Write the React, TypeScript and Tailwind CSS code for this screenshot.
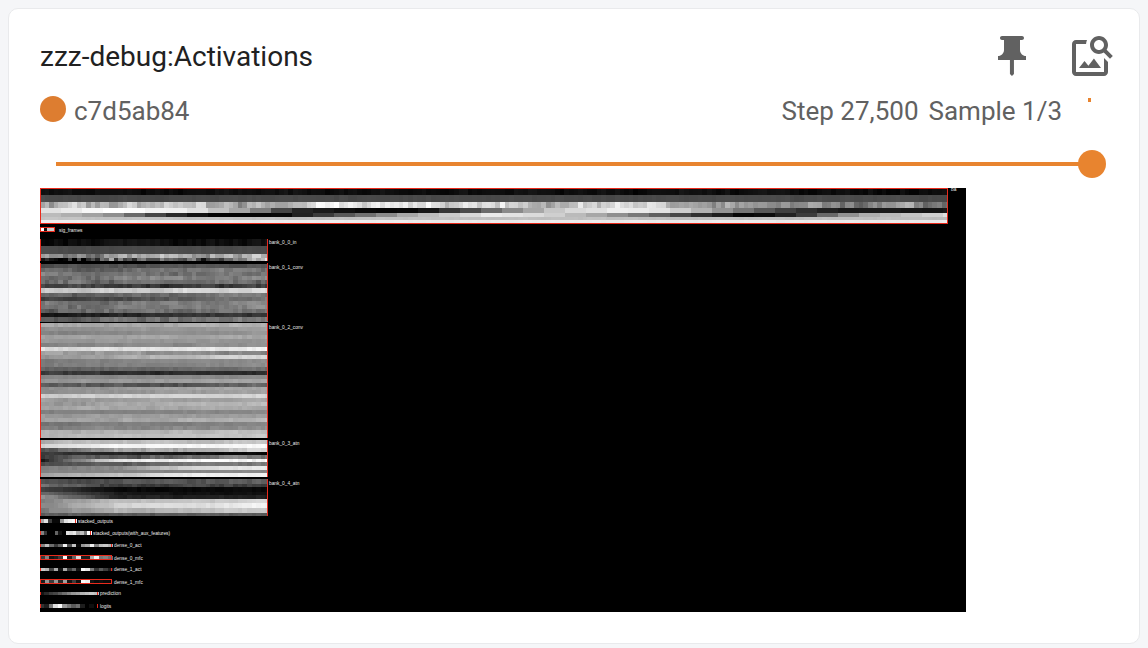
import React, { useMemo } from "react";

const RED = "#e92a1c";
const FONT = { fontFamily: "Roboto, sans-serif" };

function rng(seed: number) {
  return () => {
    seed |= 0;
    seed = (seed + 0x6d2b79f5) | 0;
    let t = Math.imul(seed ^ (seed >>> 15), 1 | seed);
    t = (t + Math.imul(t ^ (t >>> 7), 61 | t)) ^ t;
    return ((t ^ (t >>> 14)) >>> 0) / 4294967296;
  };
}

function lerp(points: number[][], x: number) {
  if (x <= points[0][0]) return points[0][1];
  for (let i = 1; i < points.length; i++) {
    if (x <= points[i][0]) {
      const [a, av] = points[i - 1];
      const [b, bv] = points[i];
      return av + ((bv - av) * (x - a)) / (b - a);
    }
  }
  return points[points.length - 1][1];
}

const gray = (v: number) => {
  const c = Math.max(0, Math.min(255, Math.round(v)));
  return `rgb(${c},${c},${c})`;
};

type Row = { h: number; p: number[][]; n: number; w?: number };
type Cell = { x: number; y: number; w: number; h: number; fill: string };

function heat(x0: number, x1: number, y0: number, rows: Row[], seed: number, cw = 4.6): Cell[] {
  const r = rng(seed);
  const cells: Cell[] = [];
  let y = y0;
  for (const row of rows) {
    const w = row.w ?? cw;
    let slow = (r() - 0.5) * 2;
    for (let x = x0; x < x1; x += w) {
      slow = 0.75 * slow + 0.5 * (r() - 0.5) * 2;
      const white = (r() - 0.5) * 2;
      const v = lerp(row.p, x) + (0.75 * slow + 0.45 * white) * row.n;
      cells.push({ x, y, w: Math.min(w + 0.4, x1 - x), h: row.h, fill: gray(v) });
    }
    y += row.h;
  }
  return cells;
}

const flat = (l: number, r: number = l, x0 = 40, x1 = 268) => [
  [x0, l],
  [x1, r],
];

const topRows: Row[] = [
  { h: 6, p: flat(14, 14, 40, 948), n: 12 },
  { h: 7, p: flat(74, 74, 40, 948), n: 5 },
  {
    h: 6,
    p: [
      [40, 185],
      [200, 190],
      [280, 140],
      [330, 225],
      [420, 225],
      [520, 205],
      [620, 190],
      [720, 160],
      [800, 150],
      [948, 130],
    ],
    n: 50,
  },
  {
    h: 5,
    w: 21,
    p: [
      [40, 220],
      [100, 255],
      [180, 235],
      [240, 150],
      [280, 40],
      [350, 5],
      [410, 10],
      [470, 90],
      [550, 205],
      [610, 240],
      [660, 225],
      [720, 140],
      [780, 60],
      [830, 25],
      [948, 20],
    ],
    n: 6,
  },
  {
    h: 4,
    w: 21,
    p: [
      [40, 190],
      [100, 150],
      [150, 60],
      [200, 5],
      [270, 5],
      [320, 70],
      [400, 170],
      [480, 235],
      [540, 215],
      [620, 130],
      [690, 50],
      [740, 0],
      [790, 50],
      [850, 170],
      [948, 225],
    ],
    n: 4,
  },
  { h: 3, p: flat(195, 190, 40, 948), n: 4 },
  { h: 3, p: flat(238, 235, 40, 948), n: 3 },
];

const bank0: Row[] = [
  { h: 7, p: flat(14), n: 12 },
  { h: 8, p: flat(75), n: 5 },
  { h: 4, p: flat(150, 190), n: 60 },
  { h: 3, p: flat(50, 130), n: 130 },
];

const bank1: Row[] = [
  [70, 90, 14],
  [105, 120, 24],
  [120, 120, 24],
  [110, 125, 28],
  [118, 95, 32],
  [60, 55, 26],
  [195, 215, 22],
  [95, 125, 22],
  [55, 120, 16],
  [115, 130, 22],
  [105, 140, 26],
  [90, 130, 30],
  [18, 60, 20],
  [95, 125, 28],
].map(([l, r, n]) => ({ h: 4.15, p: flat(l, r), n }));

const bank2: Row[] = [
  [165, 180, 14],
  [140, 160, 8],
  [128, 150, 8],
  [160, 165, 12],
  [150, 150, 10],
  [125, 150, 12],
  [215, 235, 14],
  [155, 130, 22],
  [150, 215, 14],
  [125, 140, 9],
  [120, 145, 12],
  [100, 110, 12],
  [55, 45, 16],
  [135, 135, 9],
  [150, 165, 10],
  [85, 95, 22],
  [140, 175, 12],
  [140, 165, 12],
  [205, 215, 12],
  [155, 165, 12],
  [150, 195, 16],
  [160, 175, 12],
  [125, 140, 10],
  [150, 160, 12],
  [150, 190, 14],
  [115, 135, 10],
  [130, 145, 14],
  [175, 190, 12],
  [180, 200, 8],
].map(([l, r, n]) => ({ h: 3.97, p: flat(l, r), n }));

const b = (...pts: number[]) => pts.map((v, i) => [40 + (i * 228) / (pts.length - 1), v]);

const bank3: Row[] = [
  { h: 4, p: b(175, 185, 190, 200), n: 12 },
  { h: 4, p: b(215, 250, 245, 250), n: 8 },
  { h: 3.5, p: b(90, 170, 175, 215), n: 25 },
  { h: 3.5, p: b(60, 30, 15, 8), n: 10 },
  { h: 3.5, p: b(70, 95, 110, 125), n: 26 },
  { h: 3.5, p: b(40, 225, 250, 250), n: 18 },
  { h: 4, p: b(70, 90, 120, 125), n: 14 },
  { h: 3.5, p: b(130, 140, 215, 235), n: 10 },
  { h: 3.5, p: flat(130, 135), n: 4 },
  { h: 4, p: b(165, 190, 240, 245), n: 8 },
];

const bank4: Row[] = [
  { h: 4.5, p: flat(75, 95), n: 16 },
  { h: 3, p: b(120, 60, 70, 45), n: 22 },
  { h: 5, p: b(70, 10, 8, 5), n: 8 },
  { h: 3, p: b(100, 22, 18, 15), n: 8 },
  { h: 4, p: b(140, 35, 32, 30), n: 10 },
  { h: 4.5, p: b(130, 190, 195, 215), n: 12 },
  { h: 5, p: b(130, 215, 225, 240), n: 10 },
  { h: 4.5, p: b(130, 180, 185, 205), n: 14 },
  { h: 3.5, p: flat(90, 90), n: 14 },
];

type Strip = {
  x1: number;
  y: number;
  h: number;
  boxed?: boolean;
  v: number[];
  label: string;
};

const strips: Strip[] = [
  { x1: 76, y: 519, h: 4, v: [170, 225, 60, 8, 8, 150, 225, 240, 250], label: "stacked_outputs" },
  { x1: 91, y: 531, h: 4, v: [130, 55, 0, 0, 100, 20, 0, 225, 215, 230, 170, 190, 120, 255], label: "stacked_outputs(with_aux_features)" },
  { x1: 112, y: 544, h: 3, v: [130, 190, 110, 60, 100, 240, 80, 195, 10, 150, 170, 240, 130, 190, 200, 180], label: "dense_0_act" },
  { x1: 112, y: 556, h: 4, boxed: true, v: [60, 130, 20, 30, 60, 250, 30, 100, 220, 30, 30, 170, 240, 120, 130, 110], label: "dense_0_mfc" },
  { x1: 112, y: 568, h: 3, v: [200, 180, 70, 170, 20, 170, 60, 100, 20, 250, 230, 120, 50, 90, 60, 30], label: "dense_1_act" },
  { x1: 112, y: 580, h: 4, boxed: true, v: [30, 150, 60, 150, 40, 160, 20, 60, 15, 250, 240, 20, 10, 15, 10, 10], label: "dense_1_mfc" },
  { x1: 98, y: 592, h: 3, v: [20, 40, 60, 70, 90, 110, 130, 150, 160, 180, 190, 200, 190], label: "prediction" },
  { x1: 98, y: 604, h: 4, v: [50, 30, 120, 220, 250, 150, 120, 90, 110, 30, 0, 15, 0], label: "logits" },
];

function Activations() {
  const cells = useMemo(
    () => [
      ...heat(40, 948, 189, topRows, 11),
      ...heat(40, 268, 239, bank0, 23),
      ...heat(40, 268, 263.5, bank1, 37),
      ...heat(40, 268, 323, bank2, 41),
      ...heat(40, 268, 440, bank3, 53),
      ...heat(40, 268, 479, bank4, 67),
    ],
    []
  );
  const labels: [string, number, number][] = [
    ["bank_0_0_in", 269, 244],
    ["bank_0_1_conv", 269, 269],
    ["bank_0_2_conv", 269, 329],
    ["bank_0_3_atn", 269, 445],
    ["bank_0_4_atn", 269, 485],
    ["sig_frames", 59, 232],
    ["ba", 951, 191],
  ];
  const edges: [number, number][] = [
    [239, 22],
    [263, 58],
    [323, 115],
    [440, 37],
    [479, 37],
  ];
  return (
    <svg
      width={926}
      height={424}
      viewBox="40 188 926 424"
      className="block bg-black"
      shapeRendering="crispEdges"
    >
      {cells.map((c, i) => (
        <rect key={i} x={c.x} y={c.y} width={c.w} height={c.h} fill={c.fill} />
      ))}
      <rect x={40.5} y={188.5} width={907} height={35} fill="none" stroke={RED} />
      {edges.map(([y, h]) => (
        <g key={y}>
          <rect x={40} y={y} width={1} height={h} fill={RED} />
          <rect x={267} y={y} width={1} height={h} fill={RED} />
        </g>
      ))}
      <rect x={41} y={228} width={13} height={3} fill="#ccc" />
      <rect x={41} y={228} width={3} height={3} fill="#fff" />
      <rect x={44} y={228} width={3} height={3} fill="#111" />
      <rect x={40.5} y={227.5} width={14} height={4} fill="none" stroke={RED} />
      {strips.map((s) => {
        const cw = (s.x1 - 40) / s.v.length;
        return (
          <g key={s.label}>
            {s.v.map((v, i) => (
              <rect key={i} x={40 + i * cw} y={s.y} width={cw + 0.5} height={s.h} fill={gray(v)} />
            ))}
            {s.boxed ? (
              <rect x={40.5} y={s.y - 0.5} width={s.x1 - 41} height={s.h} fill="none" stroke={RED} />
            ) : (
              <>
                <rect x={40} y={s.y} width={1} height={s.h} fill={RED} />
                <rect x={s.x1 - 1} y={s.y} width={1} height={s.h} fill={RED} />
              </>
            )}
            <text x={s.x1 + 2} y={s.y + s.h} fill="#eee" fontSize={4.8} fontFamily="Liberation Sans, sans-serif">
              {s.label}
            </text>
          </g>
        );
      })}
      {labels.map(([t, x, y]) => (
        <text key={t} x={x} y={y} fill="#eee" fontSize={4.8} fontFamily="Liberation Sans, sans-serif">
          {t}
        </text>
      ))}
    </svg>
  );
}

export default function App() {
  return (
    <div className="h-[648px] w-[1148px] bg-[#f5f6f8] pl-2 pr-2 pt-2" style={FONT}>
      <div className="flex h-[636px] flex-col rounded-[10px] border border-[#e9eaec] bg-white pl-[31px] pr-[23px] pt-[23px]">
        <div className="flex h-12 items-center justify-between">
          <span className="pt-[2px] text-[28px] leading-none text-[#212121]">zzz-debug:Activations</span>
          <div className="flex gap-8">
            <svg width={48} height={48} viewBox="0 0 24 24" fill="#616161">
              <path d="M16 9V4h1c.55 0 1-.45 1-1s-.45-1-1-1H7c-.55 0-1 .45-1 1s.45 1 1 1h1v5c0 1.66-1.34 3-3 3v2h5.97v7l1 1 1-1v-7H19v-2c-1.66 0-3-1.34-3-3z" />
            </svg>
            <svg width={48} height={48} viewBox="0 0 24 24" fill="#616161">
              <path d="M18 13v7H4V6h5.02c.05-.71.22-1.38.48-2H4c-1.1 0-2 .9-2 2v14c0 1.1.9 2 2 2h14c1.1 0 2-.9 2-2v-5l-2-2zm-1.5 5h-11l2.75-3.53 1.96 2.36 2.75-3.54L16.5 18zm2.8-9.11c.44-.7.7-1.51.7-2.39C20 4.01 17.99 2 15.5 2S11 4.01 11 6.5s2.01 4.5 4.49 4.5c.88 0 1.7-.26 2.39-.7L21 13.42 22.42 12 19.3 8.89zM15.5 9C14.12 9 13 7.88 13 6.5S14.12 4 15.5 4 18 5.12 18 6.5 16.88 9 15.5 9z" />
            </svg>
          </div>
        </div>
        <div className="mt-[14px] flex h-8 items-center text-[26px] leading-none text-[#616161]">
          <span className="mb-[2px] h-[26px] w-[26px] rounded-full bg-[#dd7d30]" />
          <span className="ml-2 pt-[2px]">c7d5ab84</span>
          <span className="ml-auto pt-[2px]">Step 27,500</span>
          <span className="ml-[10px] pt-[2px]">Sample 1/3</span>
          <span className="mb-5 ml-[26px] mr-[25px] h-1 w-[3px] bg-[#e8842f]" />
        </div>
        <div className="mt-6 flex h-7 items-center pl-4 pr-[10px]">
          <div className="h-1 flex-1 bg-[#e8842f]" />
          <div className="-ml-[14px] h-7 w-7 rounded-full bg-[#e8842f]" />
        </div>
        <div className="mt-[10px]">
          <Activations />
        </div>
      </div>
    </div>
  );
}
